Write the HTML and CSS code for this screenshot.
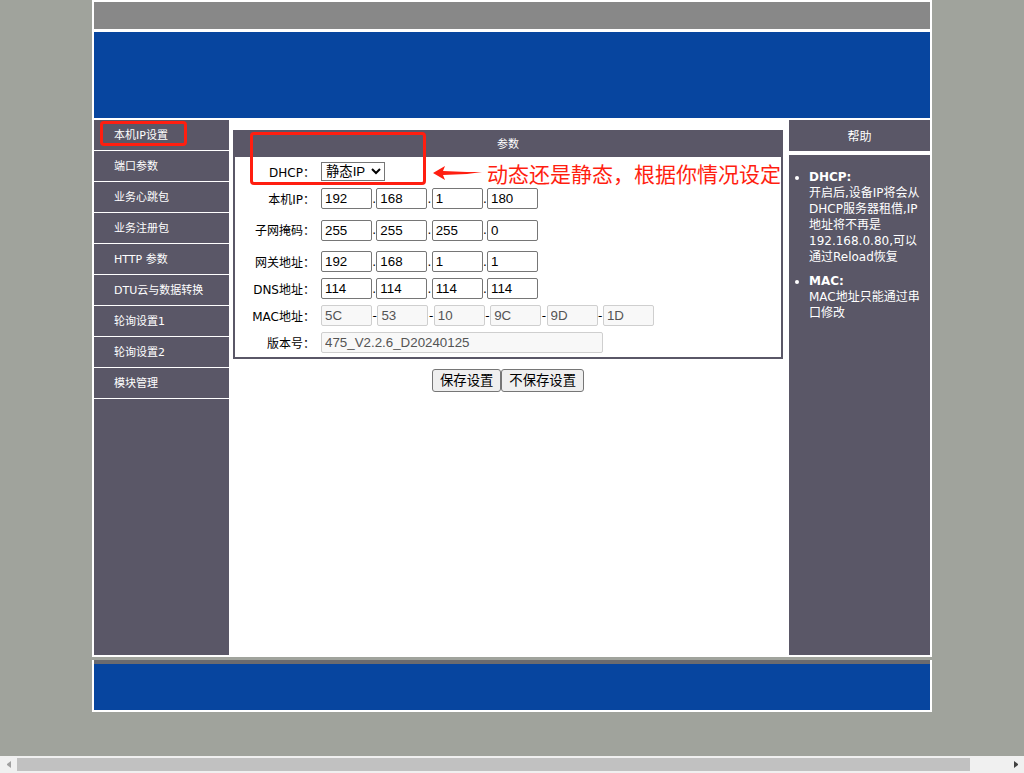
FILE: index.html
```html
<!DOCTYPE html>
<html lang="zh-CN">
<head>
    <meta charset="UTF-8">
    <meta name="viewport" content="width=device-width, initial-scale=1.0">
    <title>本机IP设置</title>
    <link rel="stylesheet" href="styles.css">
</head>
<body>
    <div class="wrapper">
        <div class="topbar"></div>
        <div class="banner"></div>

        <div class="content">
            <!-- Left menu -->
            <ul class="menu">
                <li><a href="#">本机IP设置</a><span class="mark mark-menu"></span></li>
                <li><a href="#">端口参数</a></li>
                <li><a href="#">业务心跳包</a></li>
                <li><a href="#">业务注册包</a></li>
                <li><a href="#">HTTP 参数</a></li>
                <li><a href="#">DTU云与数据转换</a></li>
                <li><a href="#">轮询设置1</a></li>
                <li><a href="#">轮询设置2</a></li>
                <li><a href="#">模块管理</a></li>
            </ul>

            <!-- Parameters -->
            <form class="main" onsubmit="return false">
                <div class="panel">
                    <h1>参数</h1>
                    <table class="params">
                        <tr>
                            <th><label for="dhcp">DHCP：</label></th>
                            <td>
                                <select id="dhcp">
                                    <option>静态IP</option>
                                    <option>动态IP</option>
                                </select>
                            </td>
                        </tr>
                        <tr>
                            <th><label for="ip1">本机IP：</label></th>
                            <td>
                                <div class="octets">
                                    <input type="text" id="ip1" value="192">.<input type="text" aria-label="本机IP 2" value="168">.<input type="text" aria-label="本机IP 3" value="1">.<input type="text" aria-label="本机IP 4" value="180">
                                </div>
                            </td>
                        </tr>
                        <tr class="tall">
                            <th><label for="mask1">子网掩码：</label></th>
                            <td>
                                <div class="octets">
                                    <input type="text" id="mask1" value="255">.<input type="text" aria-label="子网掩码 2" value="255">.<input type="text" aria-label="子网掩码 3" value="255">.<input type="text" aria-label="子网掩码 4" value="0">
                                </div>
                            </td>
                        </tr>
                        <tr>
                            <th><label for="gw1">网关地址：</label></th>
                            <td>
                                <div class="octets">
                                    <input type="text" id="gw1" value="192">.<input type="text" aria-label="网关地址 2" value="168">.<input type="text" aria-label="网关地址 3" value="1">.<input type="text" aria-label="网关地址 4" value="1">
                                </div>
                            </td>
                        </tr>
                        <tr>
                            <th><label for="dns1">DNS地址：</label></th>
                            <td>
                                <div class="octets">
                                    <input type="text" id="dns1" value="114">.<input type="text" aria-label="DNS地址 2" value="114">.<input type="text" aria-label="DNS地址 3" value="114">.<input type="text" aria-label="DNS地址 4" value="114">
                                </div>
                            </td>
                        </tr>
                        <tr>
                            <th><label for="mac1">MAC地址：</label></th>
                            <td>
                                <div class="octets mac">
                                    <input type="text" id="mac1" value="5C" disabled>-<input type="text" aria-label="MAC地址 2" value="53" disabled>-<input type="text" aria-label="MAC地址 3" value="10" disabled>-<input type="text" aria-label="MAC地址 4" value="9C" disabled>-<input type="text" aria-label="MAC地址 5" value="9D" disabled>-<input type="text" aria-label="MAC地址 6" value="1D" disabled>
                                </div>
                            </td>
                        </tr>
                        <tr>
                            <th><label for="version">版本号：</label></th>
                            <td><input type="text" id="version" class="version" value="475_V2.2.6_D20240125" disabled></td>
                        </tr>
                    </table>
                    <span class="mark mark-dhcp"></span>
                    <div class="note">
                        <svg width="50" height="14" viewBox="0 0 50 14" aria-hidden="true">
                            <path d="M0 7 L12 0 L10 5 L34 6 L49 6 L34 8 L10 9 L12 14 Z" fill="#ff1e10"/>
                        </svg>
                        <span>动态还是静态，根据你情况设定</span>
                    </div>
                </div>
                <div class="buttons">
                    <button type="submit">保存设置</button>
                    <button type="reset">不保存设置</button>
                </div>
            </form>

            <!-- Help -->
            <div class="help">
                <h2>帮助</h2>
                <ul>
                    <li><strong>DHCP:</strong><br>开启后,设备IP将会从DHCP服务器租借,IP地址将不再是192.168.0.80,可以通过Reload恢复</li>
                    <li><strong>MAC:</strong><br>MAC地址只能通过串口修改</li>
                </ul>
            </div>
        </div>
    </div>
    <div class="footer"></div>

    <div class="scrollbar">
        <button type="button" aria-label="向左滚动"><svg width="4" height="7" viewBox="0 0 4 7"><path d="M4 0V7L0 4V3Z" fill="#a0a0a0"/></svg></button>
        <div class="track"><div class="thumb"></div></div>
        <button type="button" aria-label="向右滚动"><svg width="4" height="7" viewBox="0 0 4 7"><path d="M0 0V7L4 4V3Z" fill="#404040"/></svg></button>
    </div>
</body>
</html>
```

FILE: styles.css
```css
* {
    box-sizing: border-box;
}
body {
    margin: 0;
    background: #a0a39c;
    font-family: "DejaVu Sans", "Noto Sans CJK SC", sans-serif;
    font-size: 12px;
    color: #000;
}
h1, h2, ul {
    margin: 0;
    padding: 0;
}
.wrapper, .footer {
    max-width: 840px;
    margin: 0 auto;
    border: 2px solid #fff;
}
.wrapper {
    background: #fff;
}
.topbar {
    height: 27px;
    margin-bottom: 3px;
    background: #888;
}
.banner {
    height: 86px;
    margin-bottom: 2px;
    background: #07459f;
}
.content {
    display: flex;
    min-height: 535px;
}

/* menu */
.menu {
    flex: 0 0 135px;
    background: #5a5767;
    list-style: none;
    font-size: 11px;
}
.menu li {
    position: relative;
    border-bottom: 1px solid #fff;
}
.menu a {
    display: block;
    padding: 2px 0 0 20px;
    line-height: 28px;
    color: #fff;
    text-decoration: none;
}

/* parameters */
.main {
    flex: 1;
    padding: 10px 6px 0 4px;
}
.panel {
    position: relative;
    border: 2px solid #5a5767;
    border-top: 0;
    padding-bottom: 1px;
}
.panel h1 {
    margin-bottom: 1px;
    padding-top: 3px;
    background: #5a5767;
    color: #fff;
    font-size: 11px;
    font-weight: normal;
    line-height: 24px;
    text-align: center;
}
.params {
    width: 100%;
    border-collapse: collapse;
}
.params tr {
    height: 27px;
}
.params .tall {
    height: 36px;
}
.params th {
    width: 80px;
    padding: 2px 0 0;
    font-weight: normal;
    line-height: 16px;
    text-align: right;
    white-space: nowrap;
}
.params td {
    padding: 0 0 0 6px;
}
.octets {
    display: flex;
    justify-content: space-between;
    align-items: center;
    width: 217px;
}
.mac {
    width: 333px;
}
input, select, button {
    font-family: "Liberation Sans", "Noto Sans CJK SC", sans-serif;
}
input {
    display: block;
    width: 51px;
    height: 21px;
    padding: 1px 3px;
    border: 1px solid #767676;
    border-radius: 2px;
    background: #fff;
}
input:disabled {
    border-color: #cfcfcf;
    background: #f8f8f8;
    color: #545454;
}
.version {
    width: 282px;
}
select {
    display: block;
    width: 64px;
    height: 19px;
    border: 1px solid #767676;
    background: #fff;
}
.buttons {
    display: flex;
    justify-content: center;
    margin-top: 10px;
}
.buttons button {
    height: 23px;
    padding: 1px 7px 0;
    border: 1px solid #767676;
    border-radius: 3px;
    background: #efefef;
    line-height: 20px;
}

/* red marks */
.mark {
    position: absolute;
    border: 3px solid #ff1e10;
    border-radius: 4px;
    pointer-events: none;
}
.mark-menu {
    top: 1px;
    left: 6px;
    width: 87px;
    height: 25px;
}
.mark-dhcp {
    top: 2px;
    left: 15px;
    width: 176px;
    height: 53px;
}
.note {
    position: absolute;
    top: 28px;
    right: 0;
    display: flex;
    align-items: center;
    gap: 4px;
    color: #ff1e10;
    font-family: "Noto Sans CJK SC", sans-serif;
    font-size: 21px;
    line-height: 30px;
    white-space: nowrap;
    pointer-events: none;
}

/* help */
.help {
    display: flex;
    flex-direction: column;
    flex: 0 0 141px;
    color: #fff;
}
.help h2 {
    margin-bottom: 4px;
    padding-top: 3px;
    background: #5a5767;
    font-size: 12px;
    font-weight: normal;
    line-height: 28px;
    text-align: center;
}
.help ul {
    flex: 1;
    padding: 14px 6px 0 20px;
    background: #5a5767;
    line-height: 16px;
}
.help li {
    margin-bottom: 8px;
}

.footer {
    height: 52px;
    margin-top: 3px;
    margin-bottom: 61px;
    border-top: 0;
    background: #07459f;
    box-shadow: inset 0 4px #6b6b6f;
}

/* horizontal scrollbar */
.scrollbar {
    position: fixed;
    right: 0;
    bottom: 0;
    left: 0;
    display: flex;
    height: 17px;
    background: #f0f0f0;
}
.scrollbar button {
    display: flex;
    justify-content: center;
    align-items: center;
    width: 17px;
    padding: 0;
    border: 0;
    background: none;
}
.track {
    flex: 1;
    padding: 2px 37px 2px 0;
}
.thumb {
    height: 13px;
    background: #c1c1c1;
}
```
